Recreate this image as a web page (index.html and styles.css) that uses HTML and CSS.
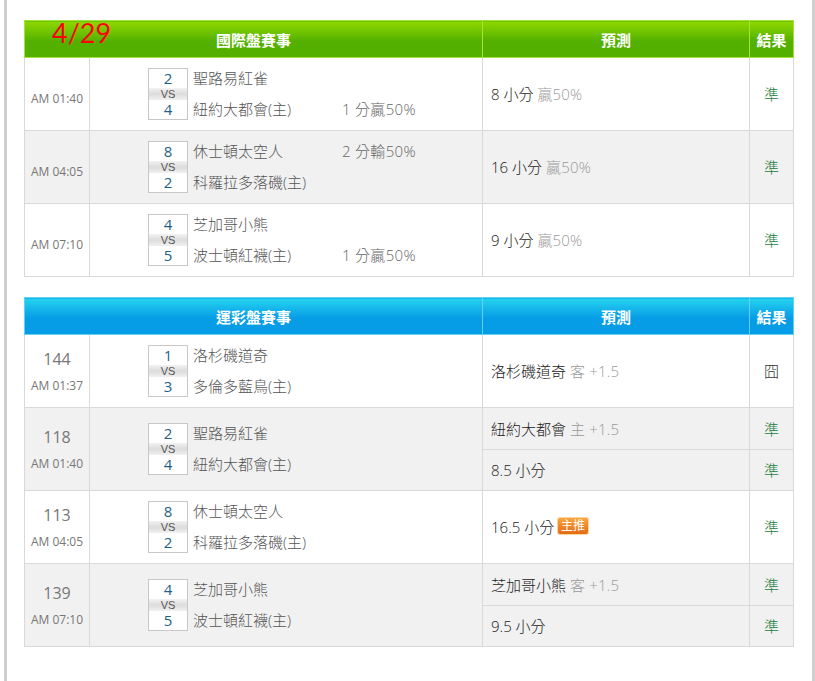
FILE: index.html
```html
<!DOCTYPE html>
<html lang="zh-Hant">
<head>
<meta charset="utf-8">
<title>盤賽事</title>
<link rel="stylesheet" href="styles.css">
</head>
<body>
<div class="page">
  <div class="sheet">
    <span class="date">4/29</span>
    <table class="grid green">
      <colgroup><col class="c1"><col class="c2"><col class="c3"><col class="c4"></colgroup>
      <thead><tr><th colspan="2">國際盤賽事</th><th>預測</th><th>結果</th></tr></thead>
      <tbody>
        <tr>
          <td class="time"><div class="clock solo">AM 01:40</div></td>
          <td><div class="match"><div class="score"><span>2</span><b>VS</b><span>4</span></div><div class="teams"><div class="team"><span class="name">聖路易紅雀</span></div><div class="team"><span class="name">紐約大都會(主)</span><span class="spread">1 分贏50%</span></div></div></div></td>
          <td class="pick">8 小分 <em>贏50%</em></td><td class="res">準</td>
        </tr>
        <tr class="alt">
          <td class="time"><div class="clock solo">AM 04:05</div></td>
          <td><div class="match"><div class="score"><span>8</span><b>VS</b><span>2</span></div><div class="teams"><div class="team"><span class="name">休士頓太空人</span><span class="spread">2 分輸50%</span></div><div class="team"><span class="name">科羅拉多落磯(主)</span></div></div></div></td>
          <td class="pick">16 小分 <em>贏50%</em></td><td class="res">準</td>
        </tr>
        <tr>
          <td class="time"><div class="clock solo">AM 07:10</div></td>
          <td><div class="match"><div class="score"><span>4</span><b>VS</b><span>5</span></div><div class="teams"><div class="team"><span class="name">芝加哥小熊</span></div><div class="team"><span class="name">波士頓紅襪(主)</span><span class="spread">1 分贏50%</span></div></div></div></td>
          <td class="pick">9 小分 <em>贏50%</em></td><td class="res">準</td>
        </tr>
      </tbody>
    </table>
    <table class="grid blue">
      <colgroup><col class="c1"><col class="c2"><col class="c3"><col class="c4"></colgroup>
      <thead><tr><th colspan="2">運彩盤賽事</th><th>預測</th><th>結果</th></tr></thead>
      <tbody>
        <tr>
          <td class="time"><div class="num">144</div><div class="clock">AM 01:37</div></td>
          <td><div class="match"><div class="score"><span>1</span><b>VS</b><span>3</span></div><div class="teams"><div class="team"><span class="name">洛杉磯道奇</span></div><div class="team"><span class="name">多倫多藍鳥(主)</span></div></div></div></td>
          <td class="pick">洛杉磯道奇 <em>客 +1.5</em></td><td class="res miss">囧</td>
        </tr>
        <tr class="alt top">
          <td class="time" rowspan="2"><div class="num">118</div><div class="clock">AM 01:40</div></td>
          <td rowspan="2"><div class="match"><div class="score"><span>2</span><b>VS</b><span>4</span></div><div class="teams"><div class="team"><span class="name">聖路易紅雀</span></div><div class="team"><span class="name">紐約大都會(主)</span></div></div></div></td>
          <td class="pick">紐約大都會 <em>主 +1.5</em></td><td class="res">準</td>
        </tr>
        <tr class="alt bottom">
          <td class="pick">8.5 小分</td><td class="res">準</td>
        </tr>
        <tr>
          <td class="time"><div class="num">113</div><div class="clock">AM 04:05</div></td>
          <td><div class="match"><div class="score"><span>8</span><b>VS</b><span>2</span></div><div class="teams"><div class="team"><span class="name">休士頓太空人</span></div><div class="team"><span class="name">科羅拉多落磯(主)</span></div></div></div></td>
          <td class="pick">16.5 小分 <i class="tag">主推</i></td><td class="res">準</td>
        </tr>
        <tr class="alt top">
          <td class="time" rowspan="2"><div class="num">139</div><div class="clock">AM 07:10</div></td>
          <td rowspan="2"><div class="match"><div class="score"><span>4</span><b>VS</b><span>5</span></div><div class="teams"><div class="team"><span class="name">芝加哥小熊</span></div><div class="team"><span class="name">波士頓紅襪(主)</span></div></div></div></td>
          <td class="pick">芝加哥小熊 <em>客 +1.5</em></td><td class="res">準</td>
        </tr>
        <tr class="alt bottom">
          <td class="pick">9.5 小分</td><td class="res">準</td>
        </tr>
      </tbody>
    </table>
  </div>
</div>
</body>
</html>
```
FILE: styles.css
```css
html, body { margin: 0; padding: 0; background: #fff; }
body { font-family: "Open Sans", "Noto Sans CJK TC", sans-serif; font-size: 15px; font-weight: 300; color: #333; overflow: hidden; }
.page { width: 805px; height: 681px; margin-left: 4px; border-left: 3px solid #cfcfcf; border-right: 3px solid #cfcfcf; }
.sheet { position: relative; padding: 20px 0 0 17px; }
.date { position: absolute; left: 45px; top: 15px; font-family: "Lato", sans-serif; font-size: 27px; font-weight: 400; line-height: 36px; color: #f00; z-index: 1; }
.grid { width: 769px; table-layout: fixed; border-collapse: collapse; margin-bottom: 20px; }
.c1 { width: 65px; } .c2 { width: 393px; } .c3 { width: 267px; } .c4 { width: 44px; }
.grid th { height: 36px; padding: 0; font-size: 15px; font-weight: 700; color: #fff; text-align: center; }
.green th { background: linear-gradient(#8fd800 0%, #53b000 55%, #53b000 100%); border: 1px solid #a5e23c; }
.blue th { background: linear-gradient(#26d3ef 0%, #069ce6 55%, #069ce6 100%); border: 1px solid #62d2f2; }
.grid td { height: 72px; padding: 0; border: 1px solid #d9d9d9; }
.alt td { background: #f1f1f1; }
.grid td.pick, .grid td.res { height: 70px; padding-bottom: 2px; }
.grid .top td.pick, .grid .top td.res { height: 41px; padding-bottom: 0; }
.grid .bottom td.pick, .grid .bottom td.res { height: 38px; }
.time { text-align: center; color: #777; }
.clock { font-size: 12px; font-weight: 400; line-height: 16px; }
.clock.solo { padding-top: 9px; }
.num { font-size: 16px; font-weight: 400; line-height: 20px; margin-bottom: 9px; padding-top: 1px; }
.match { display: flex; align-items: center; padding-left: 58px; }
.score { width: 38px; border: 1px solid #c8c8c8; background: #fff; text-align: center; flex: none; }
.score span { display: block; height: 19px; line-height: 19px; font-size: 15px; font-weight: 400; color: #1f5f86; }
.score b { display: block; height: 12px; line-height: 12px; font-family: "Liberation Sans", sans-serif; font-size: 11px; font-weight: 400; color: #555; background: linear-gradient(#f2f2f2, #dcdcdc 50%, #f0f0f0); }
.teams { margin-left: 5px; color: #555; }
.team { display: flex; height: 31px; line-height: 31px; }
.name { width: 149px; }
.spread { color: #666; letter-spacing: .3px; }
.pick { padding-left: 8px !important; color: #222; }
.pick em { font-style: normal; color: #999; letter-spacing: .2px; }
.res { text-align: center; color: #1c7d3d; }
.res.miss { color: #333; }
.tag { display: inline-block; height: 16px; line-height: 16px; padding: 0 3px; margin-left: -1px; font-size: 12px; font-style: normal; font-weight: 400; color: #fff; border-radius: 3px; vertical-align: 3px; background: linear-gradient(#f9a53f, #e26c15); border: 1px solid #fbd59b; }
```
